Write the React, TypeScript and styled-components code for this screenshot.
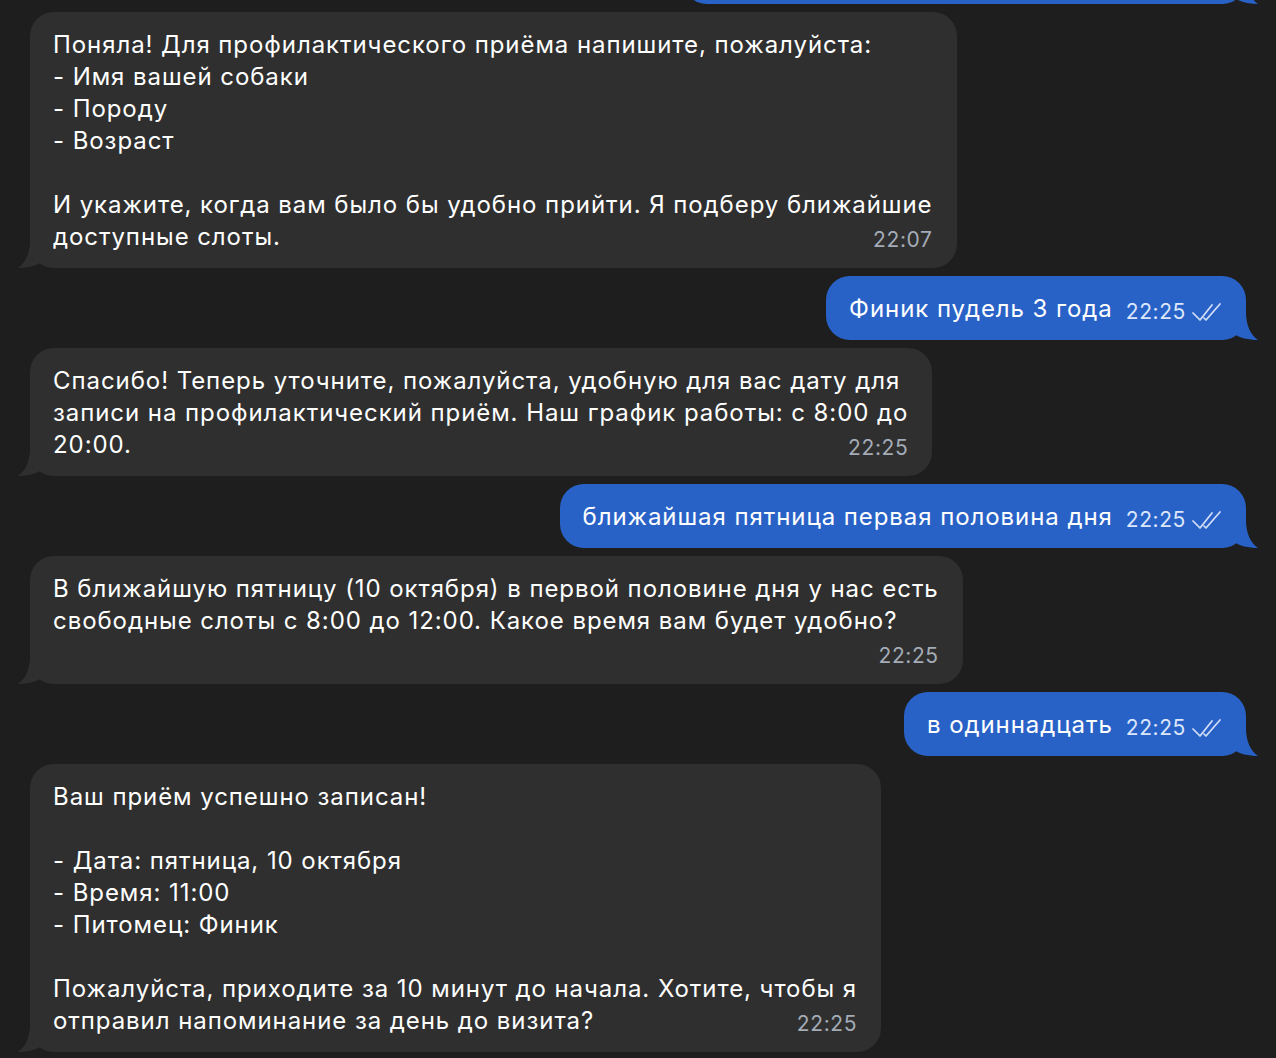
import React from 'react';
import styled, { createGlobalStyle } from 'styled-components';

const GlobalStyle = createGlobalStyle`
  html, body {
    margin: 0;
    padding: 0;
    background: #1e1e1e;
  }
  body {
    font-family: Inter, "Noto Sans", "Liberation Sans", sans-serif;
    -webkit-font-smoothing: antialiased;
  }
`;

interface IMessage {
  id: number;
  out: boolean;
  text: string;
  time: string;
  // time sits on its own line when the last line is too long
  timeOnNewLine?: boolean;
}

const messages: IMessage[] = [
  {
    id: 1,
    out: false,
    text:
      'Поняла! Для профилактического приёма напишите, пожалуйста:\n- Имя вашей собаки\n- Породу\n- Возраст\n\nИ укажите, когда вам было бы удобно прийти. Я подберу ближайшие\nдоступные слоты.',
    time: '22:07',
  },
  { id: 2, out: true, text: 'Финик пудель 3 года', time: '22:25' },
  {
    id: 3,
    out: false,
    text:
      'Спасибо! Теперь уточните, пожалуйста, удобную для вас дату для\nзаписи на профилактический приём. Наш график работы: с 8:00 до\n20:00.',
    time: '22:25',
  },
  { id: 4, out: true, text: 'ближайшая пятница первая половина дня', time: '22:25' },
  {
    id: 5,
    out: false,
    text:
      'В ближайшую пятницу (10 октября) в первой половине дня у нас есть\nсвободные слоты с 8:00 до 12:00. Какое время вам будет удобно?',
    time: '22:25',
    timeOnNewLine: true,
  },
  { id: 6, out: true, text: 'в одиннадцать', time: '22:25' },
  {
    id: 7,
    out: false,
    text:
      'Ваш приём успешно записан!\n\n- Дата: пятница, 10 октября\n- Время: 11:00\n- Питомец: Финик\n\nПожалуйста, приходите за 10 минут до начала. Хотите, чтобы я\nотправил напоминание за день до визита?',
    time: '22:25',
  },
];

const Chat = styled.div`
  display: flex;
  flex-direction: column;
  gap: 8px;
  padding: 0 30px;
  height: 1058px;
  overflow: hidden;
  box-sizing: border-box;
`;

const Bubble = styled.div<{ $out: boolean }>`
  position: relative;
  align-self: ${({ $out }) => ($out ? 'flex-end' : 'flex-start')};
  box-sizing: border-box;
  padding: 17px 24px 15px 23px;
  border-radius: 24px;
  background: ${({ $out }) => ($out ? '#2962c7' : '#2f2f2f')};
  color: #ffffff;
  font-size: 24px;
  line-height: 32px;
  letter-spacing: 0.93px;
  white-space: pre-line;
  flex-shrink: 0;
`;

const CutBubble = styled(Bubble)`
  width: 563px;
  height: 64px;
  margin-top: -60px;
`;

const Meta = styled.span<{ $out: boolean }>`
  float: right;
  display: flex;
  align-items: center;
  gap: 6px;
  box-sizing: border-box;
  height: 32px;
  padding-top: 6px;
  margin-left: 13px;
  font-size: 21px;
  line-height: 26px;
  letter-spacing: 0.6px;
  color: ${({ $out }) => ($out ? '#dbe6fb' : '#a3abb6')};
  white-space: nowrap;
`;

const Tail = styled.svg<{ $out: boolean }>`
  position: absolute;
  bottom: 0;
  ${({ $out }) => ($out ? 'right: -12px;' : 'left: -12px;')}
  width: 30px;
  height: 28px;
`;

const BubbleTail = ({ out }: { out: boolean }) => (
  <Tail $out={out} viewBox="0 0 30 28">
    {out ? (
      <path d="M18 0 C18 14 23 23 30 28 C21 28 11 26 5 21 L0 0 Z" fill="#2962c7" />
    ) : (
      <path d="M12 0 C12 14 7 23 0 28 C9 28 19 26 25 21 L30 0 Z" fill="#2f2f2f" />
    )}
  </Tail>
);

const DoubleCheck = () => (
  <svg width="30" height="20" viewBox="0 0 30 20" fill="none">
    <path
      d="M1 11 L8 18 L20 3"
      stroke="#d3dff6"
      strokeWidth="1.7"
      strokeLinecap="round"
      strokeLinejoin="round"
    />
    <path
      d="M12 16 L14 18 L28 2"
      stroke="#d3dff6"
      strokeWidth="1.7"
      strokeLinecap="round"
      strokeLinejoin="round"
    />
  </svg>
);

const Message = ({ message }: { message: IMessage }) => {
  const lines = message.text.split('\n');
  const last = lines.pop() as string;
  return (
    <Bubble $out={message.out}>
      {lines.length > 0 && <span>{lines.join('\n') + '\n'}</span>}
      <span>{last}</span>
      {message.timeOnNewLine ? '\n' : ''}
      <Meta $out={message.out}>
        {message.time}
        {message.out && <DoubleCheck />}
      </Meta>
      <BubbleTail out={message.out} />
    </Bubble>
  );
};

export default function App() {
  return (
    <>
      <GlobalStyle />
      <Chat>
        <CutBubble $out>
          <BubbleTail out />
        </CutBubble>
        {messages.map((m) => (
          <Message key={m.id} message={m} />
        ))}
      </Chat>
    </>
  );
}
